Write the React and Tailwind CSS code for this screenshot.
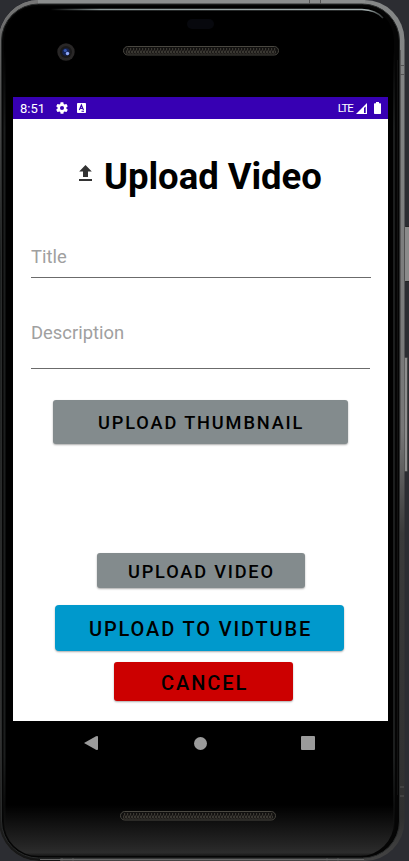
import React from "react";

function PhoneShell() {
  return (
    <svg className="absolute inset-0" width="409" height="861" viewBox="0 0 409 861" fill="none" aria-hidden="true">
      <defs>
        <linearGradient id="rim" x1="0" y1="0" x2="0" y2="861" gradientUnits="userSpaceOnUse">
          <stop offset="0" stopColor="#858787" />
          <stop offset="0.5" stopColor="#777" />
          <stop offset="0.62" stopColor="#3a3a3a" />
          <stop offset="0.95" stopColor="#303030" />
          <stop offset="1" stopColor="#444" />
        </linearGradient>
        <linearGradient id="leftRim" x1="0" y1="0" x2="0" y2="861" gradientUnits="userSpaceOnUse">
          <stop offset="0" stopColor="#777" />
          <stop offset="0.1" stopColor="#555" />
          <stop offset="0.3" stopColor="#1c1f1f" />
          <stop offset="0.85" stopColor="#333" />
          <stop offset="1" stopColor="#151515" />
        </linearGradient>
        <linearGradient id="chin" x1="0" y1="805" x2="0" y2="858" gradientUnits="userSpaceOnUse">
          <stop offset="0" stopColor="#000" />
          <stop offset="0.75" stopColor="#242424" />
          <stop offset="0.9" stopColor="#2c2c2c" />
          <stop offset="1" stopColor="#080808" />
        </linearGradient>
        <linearGradient id="edge" x1="0" y1="50" x2="0" y2="835" gradientUnits="userSpaceOnUse">
          <stop offset="0" stopColor="#1c1e1e" stopOpacity="0" />
          <stop offset="0.1" stopColor="#1c1e1e" />
          <stop offset="0.9" stopColor="#1c1e1e" />
          <stop offset="1" stopColor="#1c1e1e" stopOpacity="0" />
        </linearGradient>
        <linearGradient id="glint" x1="50" y1="0" x2="384" y2="0" gradientUnits="userSpaceOnUse">
          <stop offset="0" stopColor="#8c9898" stopOpacity="0" />
          <stop offset="0.15" stopColor="#8c9898" />
          <stop offset="0.95" stopColor="#a5b0b0" />
          <stop offset="1" stopColor="#8c9898" stopOpacity="0.3" />
        </linearGradient>
        <pattern id="mesh" width="3" height="6" patternUnits="userSpaceOnUse">
          <path d="M0 0l2 3l-2 3M2 0l1 1.5M2 6l1-1.5" stroke="#57534b" strokeWidth="0.7" />
        </pattern>
      </defs>
      <rect width="409" height="861" fill="#2c2d32" />
      <rect x="404.5" y="226.5" width="8" height="55" rx="1" fill="#8a8a8a" stroke="#222" />
      <rect x="404.5" y="357.5" width="3" height="114" rx="1" fill="#8d8d8d" stroke="#444" />
      <rect x="-1" y="0" width="405.5" height="861" rx="40" fill="url(#rim)" />
      <path d="M-1 40A40 40 0 0 1 39 0H60V861H39A40 40 0 0 1-1 821Z" fill="url(#leftRim)" />
      <rect x="38" y="0" width="327" height="4" fill="#8b8d8d" />
      <rect x="1.5" y="4" width="398" height="854" rx="37" fill="#050505" stroke="#292b2b" />
      <rect x="4" y="6" width="390" height="850" rx="34" fill="url(#chin)" />
      <rect x="3.5" y="50" width="2" height="785" fill="url(#edge)" />
      <rect x="393" y="50" width="2" height="785" fill="url(#edge)" />
      <path d="M397.5 60V795" stroke="#111" />
      <path d="M400.5 50V450" stroke="#5b5b5b" />
      <path d="M50 9.5H362Q376 10 383 18" stroke="url(#glint)" strokeWidth="1.5" />
      <path d="M309.5 0v4M320.5 0v4M400 65.5h4M400 74.5h4M400 787h4M400 796h4M62 858v3M73 858v3M327 858v3M338 858v3" stroke="#555" />
      <path d="M40 859.5H364" stroke="#666" />
      <rect x="187" y="19" width="27" height="10" rx="5" fill="#07080d" />
    </svg>
  );
}

function Grille({ className }) {
  return (
    <svg className={className} width="156" height="10" viewBox="0 0 156 10" fill="none" aria-hidden="true">
      <rect x="0.5" y="0.5" width="155" height="8.5" rx="4.2" fill="#11100f" stroke="#494740" />
      <rect x="3" y="2" width="150" height="6" fill="url(#mesh)" />
    </svg>
  );
}

function Camera() {
  return (
    <svg className="mt-[43px] ml-[57px]" width="18" height="18" viewBox="0 0 18 18" aria-hidden="true">
      <circle cx="9" cy="9" r="8.7" fill="#292727" />
      <circle cx="9" cy="9" r="6" fill="#1a1919" />
      <circle cx="9" cy="9" r="3.8" fill="#142353" />
      <circle cx="8.3" cy="7.5" r="1.6" fill="#3555ad" />
      <circle cx="10.5" cy="10.5" r="1.7" fill="#91a9f8" />
    </svg>
  );
}

function StatusBar() {
  return (
    <div className="flex h-[22px] items-center bg-[#3700b3] pl-[7px] text-white">
      <span className="w-[35px] pt-px text-[13px] leading-[22px]">8:51</span>
      <svg width="14" height="14" viewBox="0 0 24 24" fill="currentColor">
        <path d="M19.4 13c.1-.3.1-.7.1-1s0-.7-.1-1l2.1-1.7c.2-.1.3-.4.1-.6l-2-3.5c-.1-.2-.4-.3-.6-.2l-2.5 1c-.5-.4-1.1-.7-1.7-1l-.4-2.6c0-.2-.2-.4-.5-.4h-4c-.2 0-.4.2-.5.4l-.4 2.6c-.6.3-1.2.6-1.7 1L4.9 5c-.2-.1-.5 0-.6.2l-2 3.5c-.1.2-.1.5.1.6L4.5 11a8 8 0 0 0 0 2l-2.1 1.7c-.2.1-.2.4-.1.6l2 3.5c.1.2.4.3.6.2l2.5-1c.5.4 1.1.7 1.7 1l.4 2.6c0 .2.2.4.5.4h4c.2 0 .5-.2.5-.4l.4-2.6c.6-.3 1.2-.6 1.7-1l2.5 1c.2.1.5 0 .6-.2l2-3.5c.1-.2.1-.5-.1-.6ZM12 15.5a3.5 3.5 0 1 1 0-7 3.5 3.5 0 0 1 0 7Z" />
      </svg>
      <svg className="ml-2" width="9" height="10" viewBox="0 0 9 10">
        <rect width="9" height="10" rx="0.8" fill="white" />
        <path d="M2.3 7L4.4 2L6.5 7M3.1 5.4H5.7M4.5 8.3H7" stroke="#3700b3" strokeWidth="1.1" fill="none" />
      </svg>
      <span className="ml-auto text-[11.5px] leading-[22px] tracking-[-0.9px]">LTE</span>
      <svg className="ml-[3px]" width="11" height="11" viewBox="0 0 11 11">
        <path d="M0 11L11 0V11Z" fill="white" />
        <path d="M8 5V10H9.7V3.4Z" fill="#3700b3" />
      </svg>
      <svg className="mr-[7px] ml-[7px]" width="7" height="12" viewBox="0 0 7 12" fill="white">
        <path d="M2 0h3v1.2h1.3q.7 0 .7.7v9.4q0 .7-.7.7H.7q-.7 0-.7-.7V1.9q0-.7.7-.7H2Z" />
      </svg>
    </div>
  );
}

function UploadForm() {
  return (
    <main className="h-[602px] bg-white">
      <div className="flex h-[83px] pl-[66px]">
        <svg className="mt-[46px]" width="13" height="16" viewBox="0 0 13 16" fill="#333">
          <path d="M6.5 0L12.8 6.5H9V12H4V6.5H.2ZM0 14H13V16H0Z" />
        </svg>
        <h1 className="ml-[12px] mt-[36px] whitespace-nowrap text-[36.5px] leading-[43px] font-bold tracking-[-0.05px]">Upload Video</h1>
      </div>
      <div className="ml-[18px] mt-[34px] flex h-[42px] w-[340px] items-start border-b border-[#6b6b6b] pt-[10px] text-[18.4px] leading-[22px] text-[#a0a0a0]">
        <span>Title</span>
      </div>
      <div className="ml-[18px] flex h-[91px] w-[339px] items-start border-b border-[#6b6b6b] pt-[44px] text-[18.4px] leading-[22px] text-[#a0a0a0]">
        <span>Description</span>
      </div>
      <button className="ml-[40px] mt-[31px] flex h-[44px] w-[295px] items-center rounded-[3px] bg-[#838b8d] pl-[45px] pt-[2px] text-[18.2px] font-medium tracking-[1.86px] whitespace-nowrap shadow-[0_1px_2px_#0005]">UPLOAD THUMBNAIL</button>
      <button className="ml-[84px] mt-[109px] flex h-[35px] w-[208px] items-center rounded-[3px] bg-[#838b8d] pl-[31px] pt-[2px] text-[18.2px] font-medium tracking-[1.8px] whitespace-nowrap shadow-[0_1px_2px_#0005]">UPLOAD VIDEO</button>
      <button className="ml-[42px] mt-[17px] flex h-[46px] w-[289px] items-center rounded-[4px] bg-[#0099cc] pl-[34px] pt-[2px] text-[20px] font-medium tracking-[1.86px] whitespace-nowrap shadow-[0_1px_2px_#0005]">UPLOAD TO VIDTUBE</button>
      <button className="ml-[101px] mt-[11px] flex h-[39px] w-[179px] items-center rounded-[3px] bg-[#cc0000] pl-[47px] pt-[2px] text-[20px] font-medium tracking-[1.95px] whitespace-nowrap shadow-[0_1px_2px_#0005]">CANCEL</button>
    </main>
  );
}

function NavBar() {
  return (
    <nav className="flex h-[44px] items-center bg-black pl-[71px] text-[#9b9b9b]">
      <svg width="14" height="14" viewBox="0 0 14 14" fill="currentColor"><path d="M0 7L12 .3Q14-.5 14 1V13Q14 14.5 12 13.7Z" /></svg>
      <svg className="ml-[96px]" width="13" height="13" viewBox="0 0 13 13" fill="currentColor"><circle cx="6.5" cy="6.5" r="6.5" /></svg>
      <svg className="ml-[94px]" width="14" height="14" viewBox="0 0 14 14" fill="currentColor"><rect width="14" height="14" rx="1" /></svg>
    </nav>
  );
}

export default function App() {
  return (
    <div className="relative h-[861px] w-[409px] overflow-hidden bg-[#2c2d32] font-[Roboto,sans-serif] text-black">
      <PhoneShell />
      <div className="relative flex flex-col">
        <header className="flex h-[97px] items-start">
          <Camera />
          <Grille className="mt-[46px] ml-[48px]" />
        </header>
        <div className="ml-[13px] w-[375px]">
          <StatusBar />
          <UploadForm />
          <NavBar />
        </div>
        <footer className="pl-[120px] pt-[46px]">
          <Grille />
        </footer>
      </div>
    </div>
  );
}
